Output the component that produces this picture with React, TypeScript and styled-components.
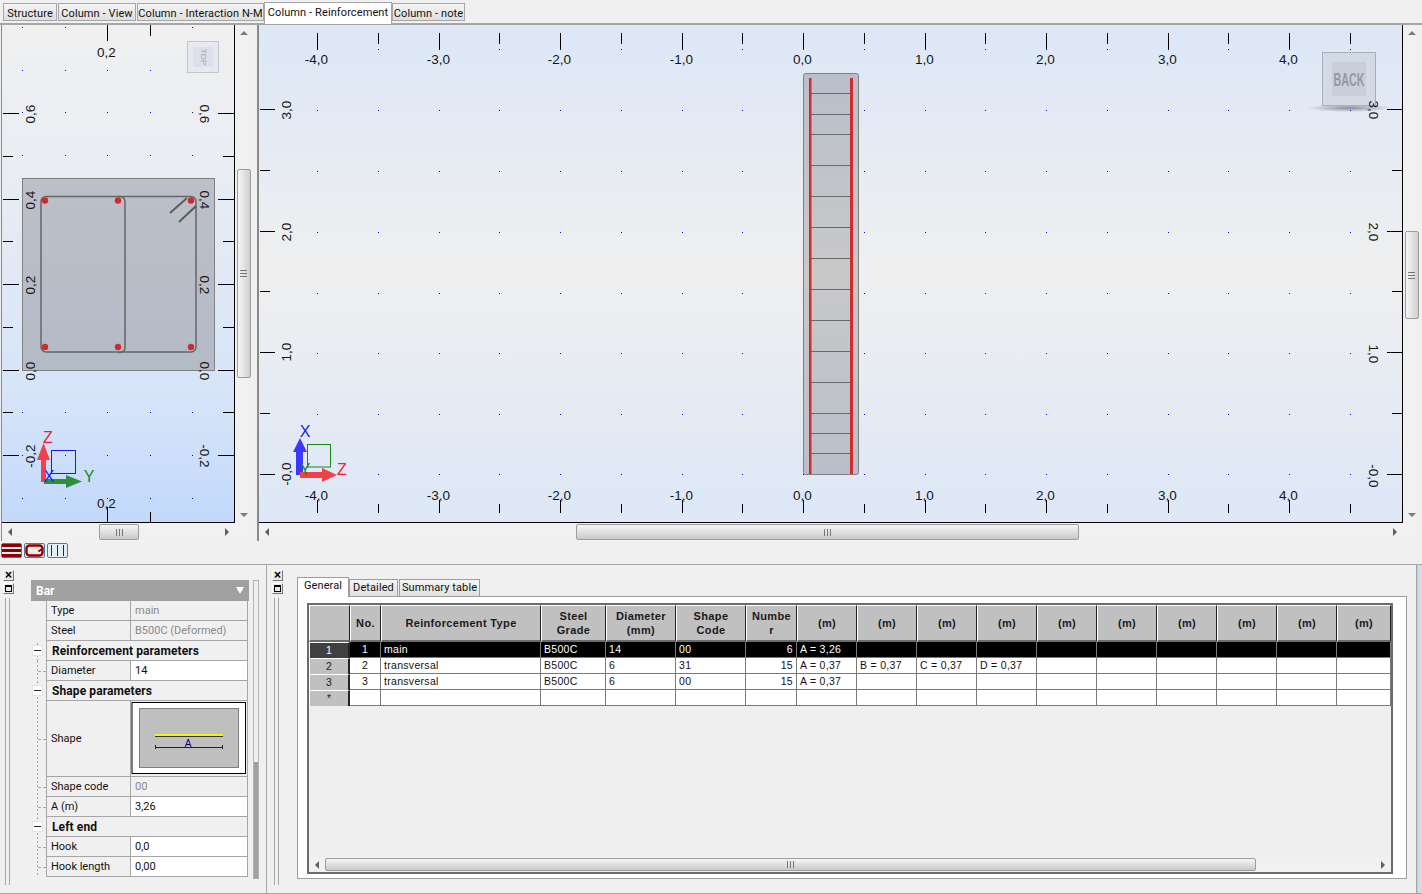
import React from "react";
import styled, { createGlobalStyle } from "styled-components";

const Global = createGlobalStyle`
  html, body { margin: 0; padding: 0; background: #f0f0f0; }
  * { box-sizing: border-box; }
`;

const UI = `Roboto, "Liberation Sans", sans-serif`;
const GRID = `"Liberation Sans", Arial, sans-serif`;

const Root = styled.div`
  width: 1422px;
  height: 894px;
  overflow: hidden;
  display: flex;
  flex-direction: column;
  background: #f0f0f0;
  font-family: ${UI};
  color: #111;
`;

const TabBar = styled.div`
  height: 25px;
  flex: none;
  display: flex;
  align-items: flex-end;
  padding-left: 3px;
  border-bottom: 2px solid #a6a6a6;
`;

const TopTab = styled.div<{ $w: number; $active?: boolean; $gap?: number }>`
  width: ${(p) => p.$w}px;
  margin-right: ${(p) => p.$gap ?? 0}px;
  height: ${(p) => (p.$active ? 22 : 18)}px;
  margin-bottom: ${(p) => (p.$active ? -1 : 2)}px;
  padding-top: 2px;
  display: flex;
  justify-content: center;
  font-size: 11px;
  letter-spacing: 0.1px;
  line-height: 15px;
  white-space: nowrap;
  background: ${(p) => (p.$active ? "#fff" : "linear-gradient(#f4f4f4, #dedede)")};
  border: 1px solid #a6a6a6;
  ${(p) => (p.$active ? "border-bottom: none;" : "")}
  position: relative;
`;

const ViewRow = styled.div`
  height: 516px;
  flex: none;
  display: flex;
  padding-left: 1px;
`;

const Pane = styled.div<{ $cols: string; $thin?: boolean }>`
  display: grid;
  grid-template-columns: ${(p) => p.$cols};
  grid-template-rows: 498px 18px;
  border-left: ${(p) => (p.$thin ? 1 : 2)}px solid #8a8a8a;
`;

const Canvas = styled.div<{ $bg: string }>`
  background: ${(p) => p.$bg};
  border-right: 1px solid #000;
  border-bottom: 1px solid #000;
  overflow: hidden;
  svg {
    display: block;
  }
`;

const ChartText = styled.text`
  font-family: ${GRID};
  font-size: 13.5px;
  fill: #151515;
  text-anchor: middle;
  dominant-baseline: central;
`;

const AxisText = styled.text<{ $c: string }>`
  font-family: ${GRID};
  font-size: 16px;
  fill: ${(p) => p.$c};
  text-anchor: middle;
`;

const Scroll = styled.div<{ $v?: boolean }>`
  display: flex;
  flex-direction: ${(p) => (p.$v ? "column" : "row")};
  background: #f1f1f1;
  min-width: 0;
  min-height: 0;
`;

const ArrowBox = styled.div<{ $v?: boolean }>`
  flex: none;
  ${(p) => (p.$v ? "height: 16px;" : "width: 16px;")}
  display: flex;
  align-items: center;
  justify-content: center;
`;

const Tri = styled.span<{ $d: "u" | "d" | "l" | "r"; $c?: string }>`
  width: 0;
  height: 0;
  ${(p) => {
    const c = p.$c ?? "#606060";
    switch (p.$d) {
      case "u":
        return `border-left:4px solid transparent;border-right:4px solid transparent;border-bottom:4px solid ${c};`;
      case "d":
        return `border-left:4px solid transparent;border-right:4px solid transparent;border-top:4px solid ${c};`;
      case "l":
        return `border-top:4px solid transparent;border-bottom:4px solid transparent;border-right:4px solid ${c};`;
      default:
        return `border-top:4px solid transparent;border-bottom:4px solid transparent;border-left:4px solid ${c};`;
    }
  }}
`;

const BarCaret = styled.span`
  width: 0;
  height: 0;
  margin-right: 0;
  border-left: 4px solid transparent;
  border-right: 4px solid transparent;
  border-top: 7px solid #fff;
`;

const ScrollZone = styled.div<{ $v?: boolean }>`
  flex: 1;
  min-width: 0;
  min-height: 0;
  display: flex;
  flex-direction: ${(p) => (p.$v ? "column" : "row")};
  ${(p) => (p.$v ? "align-items: center;" : "padding: 1px 0;")}
`;

const Thumb = styled.div<{ $v?: boolean; $off: number; $len: number; $narrow?: boolean }>`
  flex: none;
  display: flex;
  align-items: center;
  justify-content: center;
  border: 1px solid #9c9c9c;
  border-radius: 2px;
  ${(p) =>
    p.$v
      ? `margin-top:${p.$off}px;height:${p.$len}px;width:14px;background:linear-gradient(90deg,#f6f6f6,#cfcfcf);`
      : `margin-left:${p.$off}px;width:${p.$len}px;height:100%;background:linear-gradient(#f6f6f6,#c9c9c9);`}
`;

const Grip = styled.span<{ $v?: boolean }>`
  display: block;
  ${(p) =>
    p.$v
      ? "width:7px;height:7px;background:repeating-linear-gradient(#777 0 1px,transparent 1px 3px);"
      : "width:7px;height:7px;background:repeating-linear-gradient(90deg,#777 0 1px,transparent 1px 3px);"}
`;

const Scrollbar = ({ v, off, len }: { v?: boolean; off: number; len: number }) => (
  <Scroll $v={v}>
    <ArrowBox $v={v}>
      <Tri $d={v ? "u" : "l"} $c={v ? "#7c7c7c" : "#606060"} />
    </ArrowBox>
    <ScrollZone $v={v}>
      <Thumb $v={v} $off={off} $len={len}>
        <Grip $v={v} />
      </Thumb>
    </ScrollZone>
    <ArrowBox $v={v}>
      <Tri $d={v ? "d" : "r"} $c={v ? "#7c7c7c" : "#606060"} />
    </ArrowBox>
  </Scroll>
);

const Splitter = styled.div`
  width: 5px;
  flex: none;
`;

const Toolbar = styled.div`
  height: 23px;
  flex: none;
  display: flex;
  align-items: flex-start;
  gap: 2px;
  padding: 2px 0 0 1px;
`;

const ToolBtn = styled.div`
  width: 21px;
  height: 15px;
  border: 1px solid #3f7fa8;
  border-radius: 2px;
  background: #e4eef6;
  display: flex;
  svg {
    display: block;
  }
`;

const Bottom = styled.div`
  flex: 1;
  min-height: 0;
  display: flex;
  border-top: 1px solid #a6a6a6;
  border-bottom: 1px solid #a6a6a6;
`;

const LeftDock = styled.div`
  width: 267px;
  flex: none;
  display: flex;
  border-right: 1px solid #a6a6a6;
`;

const RightDock = styled.div`
  width: 1150px;
  flex: none;
  display: flex;
  border-right: 1px solid #a6a6a6;
`;

const BlueEdge = styled.div`
  flex: 1;
  background: #d2dbec;
  border-left: 1px solid #c8c8c8;
`;

const Handle = styled.div<{ $w: number; $pl: number }>`
  width: ${(p) => p.$w}px;
  flex: none;
  display: flex;
  flex-direction: column;
  padding: 5px 0 8px ${(p) => p.$pl}px;
`;

const DockBtn = styled.div`
  width: 11px;
  height: 11px;
  margin-bottom: 2px;
  background: #e8e8e8;
  border-top: 1px solid #fff;
  border-left: 1px solid #fff;
  border-right: 1px solid #777;
  border-bottom: 1px solid #777;
  font: bold 12px/9px ${GRID};
  text-align: center;
  color: #000;
`;

const RestoreMark = styled.span`
  display: block;
  margin: 1px;
  height: 7px;
  border: 1px solid #000;
  border-top-width: 2px;
`;

const Rail = styled.div`
  flex: 1;
  width: 5px;
  margin: 2px 0 0 2px;
  border-left: 1px solid #a6a6a6;
  border-right: 1px solid #a6a6a6;
`;

const PropColumn = styled.div`
  width: 218px;
  flex: none;
  padding-top: 15px;
`;

const PropHeader = styled.div`
  height: 21px;
  background: #a0a0a0;
  color: #fff;
  font-weight: 700;
  font-size: 12px;
  line-height: 20px;
  padding: 0 5px;
  display: flex;
  justify-content: space-between;
  align-items: center;
`;

const PropRow = styled.div<{ $h?: number }>`
  display: grid;
  grid-template-columns: 15px 84px 118px;
  height: ${(p) => p.$h ?? 20}px;
  width: 217px;
  font-size: 11px;
`;

const Gutter = styled.div<{ $tree?: "start" | "line" | "leaf" | "none" }>`
  position: relative;
  ${(p) =>
    p.$tree === "line" || p.$tree === "leaf"
      ? `background:linear-gradient(#a8a8a8 50%, transparent 50%) 6px 0/1px 4px repeat-y;`
      : ""}
  ${(p) =>
    p.$tree === "start"
      ? `background:linear-gradient(#a8a8a8 50%, transparent 50%) 6px 10px/1px 4px repeat-y;`
      : ""}
  ${(p) =>
    p.$tree === "leaf"
      ? `&::after{content:"";position:absolute;left:7px;width:8px;top:50%;border-top:1px dashed #a8a8a8;}`
      : ""}
`;

const Collapse = styled.span`
  position: absolute;
  left: 1px;
  top: 4px;
  width: 11px;
  height: 11px;
  background: #fff;
  border: 1px solid #e4e4e4;
  &::after {
    content: "";
    position: absolute;
    left: 1px;
    right: 1px;
    top: 4px;
    border-top: 1px solid #222;
  }
`;

const PropLabel = styled.div`
  border-left: 1px solid #a6a6a6;
  border-bottom: 1px solid #a6a6a6;
  padding-left: 4px;
  display: flex;
  align-items: center;
  white-space: nowrap;
`;

const PropValue = styled.div<{ $ro?: boolean }>`
  border-left: 1px solid #a6a6a6;
  border-right: 1px solid #a6a6a6;
  border-bottom: 1px solid #a6a6a6;
  padding-left: 4px;
  display: flex;
  align-items: center;
  white-space: nowrap;
  background: ${(p) => (p.$ro ? "#f0f0f0" : "#fff")};
  color: ${(p) => (p.$ro ? "#8a8a8a" : "#111")};
`;

const SectionTitle = styled.div`
  grid-column: 2 / 4;
  border-left: 1px solid #a6a6a6;
  border-right: 1px solid #a6a6a6;
  border-bottom: 1px solid #a6a6a6;
  padding-left: 5px;
  font-weight: 700;
  font-size: 12px;
  letter-spacing: 0.1px;
  display: flex;
  align-items: center;
  white-space: nowrap;
`;

const ShapeCell = styled.div`
  border-left: 1px solid #a6a6a6;
  border-right: 1px solid #a6a6a6;
  border-bottom: 1px solid #a6a6a6;
  padding: 1px 0 0 0;
  svg {
    display: block;
  }
`;

const GridScroll = styled.div`
  width: 6px;
  margin: 15px 0 0 4px;
  height: 299px;
  display: flex;
  flex-direction: column;
  background: #f0f0f0;
  border: 1px solid #b4b4b4;
`;

const GridScrollFill = styled.div`
  flex: none;
  margin-top: auto;
  height: 116px;
  background: #a0a0a0;
`;

const TabColumn = styled.div`
  flex: 1;
  min-width: 0;
  display: flex;
  flex-direction: column;
  padding: 12px 0 14px 1px;
`;

const InnerTabs = styled.div`
  display: flex;
  align-items: flex-end;
  height: 20px;
  flex: none;
  margin-bottom: -1px;
  position: relative;
  z-index: 1;
`;

const InnerTab = styled.div<{ $w: number; $active?: boolean }>`
  width: ${(p) => p.$w}px;
  height: ${(p) => (p.$active ? 20 : 18)}px;
  margin-right: ${(p) => (p.$active ? 0 : 1)}px;
  background: ${(p) => (p.$active ? "#fff" : "linear-gradient(#f4f4f4,#e0e0e0)")};
  border: 1px solid #9c9c9c;
  ${(p) => (p.$active ? "border-bottom: none;" : "")}
  font-size: 11px;
  letter-spacing: 0.1px;
  line-height: 16px;
  text-align: center;
  white-space: nowrap;
`;

const TabPanel = styled.div`
  flex: 1;
  min-height: 0;
  width: 1110px;
  background: #fff;
  border: 1px solid #9c9c9c;
  padding: 6px 13px 4px 9px;
  display: flex;
`;

const Table = styled.div`
  flex: 1;
  min-width: 0;
  display: flex;
  flex-direction: column;
  border: 2px solid #6c6c6c;
  background: #efefef;
  font-family: ${GRID};
  font-size: 10.5px;
`;

const COLS = "41px 31px 160px 65px 70px 70px 51px repeat(9, 60px) 1fr";

const HeadRow = styled.div`
  display: grid;
  grid-template-columns: ${COLS};
  height: 37px;
  flex: none;
`;

const HeadCell = styled.div`
  background: #c0c0c0;
  border-top: 1px solid #fff;
  border-left: 1px solid #fff;
  border-right: 1px solid #222;
  border-bottom: 2px solid #6c6c6c;
  display: flex;
  align-items: center;
  justify-content: center;
  text-align: center;
  font-weight: 700;
  font-size: 11px;
  line-height: 14px;
  letter-spacing: 0.35px;
  color: #1a1a1a;
  white-space: pre-line;
`;

const DataRow = styled.div<{ $sel?: boolean }>`
  display: grid;
  grid-template-columns: ${COLS};
  height: 16px;
  flex: none;
  background: ${(p) => (p.$sel ? "#000" : "#fff")};
  color: ${(p) => (p.$sel ? "#fff" : "#111")};
  border-bottom: 1px solid #7a7a7a;
`;

const RowHead = styled.div<{ $sel?: boolean }>`
  background: ${(p) => (p.$sel ? "#404040" : "#c0c0c0")};
  color: ${(p) => (p.$sel ? "#fff" : "#222")};
  border-top: 1px solid #fff;
  border-left: 1px solid #fff;
  border-right: 2px solid #222;
  text-align: center;
  line-height: 15px;
`;

const Cell = styled.div<{ $align?: string }>`
  border-right: 1px solid #7a7a7a;
  padding: 0 3px;
  line-height: 15px;
  letter-spacing: 0.3px;
  text-align: ${(p) => p.$align ?? "left"};
  white-space: nowrap;
  overflow: hidden;
`;

const TableSpacer = styled.div`
  flex: 1;
  min-height: 0;
`;

const TableScroll = styled.div`
  height: 15px;
  flex: none;
  display: flex;
  & > div {
    flex: 1;
  }
`;

const range = (n: number) => Array.from({ length: n }, (_, i) => i);

const Dots = ({ xs, ys }: { xs: number[]; ys: number[] }) => (
  <g fill="#0000e0">
    {ys.map((y) => xs.map((x) => <rect key={`${x}-${y}`} x={x} y={y} width="1" height="1" />))}
  </g>
);

const LeftChart = () => {
  const xs = [22, 65, 107, 150, 192];
  const ys = [27, 70, 112, 155, 412, 455, 498];
  const major = [
    [113, "0,6"],
    [199, "0,4"],
    [284, "0,2"],
    [370, "0,0"],
    [455, "-0,2"],
  ] as [number, string][];
  const minor = [156, 241, 327, 412];
  return (
    <svg width="232" height="497" viewBox="2 25 232 497">
      <Dots xs={xs} ys={ys} />
      <g stroke="#000" shapeRendering="crispEdges">
        <line x1="107.5" y1="25" x2="107.5" y2="41" />
        <line x1="150.5" y1="25" x2="150.5" y2="36" />
        <line x1="107.5" y1="507" x2="107.5" y2="522" />
        <line x1="150.5" y1="512" x2="150.5" y2="522" />
        {major.map(([y]) => (
          <g key={y}>
            <line x1="3" y1={y + 0.5} x2="19" y2={y + 0.5} />
            <line x1="218" y1={y + 0.5} x2="234" y2={y + 0.5} />
          </g>
        ))}
        {minor.map((y) => (
          <g key={y}>
            <line x1="3" y1={y + 0.5} x2="13" y2={y + 0.5} />
            <line x1="223" y1={y + 0.5} x2="234" y2={y + 0.5} />
          </g>
        ))}
      </g>
      <defs>
        <linearGradient id="secFill" x1="0" y1="0" x2="0" y2="1">
          <stop offset="0" stopColor="#bcc0c7" />
          <stop offset="1" stopColor="#b3bbc7" />
        </linearGradient>
      </defs>
      <rect x="22.5" y="178.5" width="192" height="192" fill="url(#secFill)" stroke="#808080" />
      <g fill="none" stroke="#666" strokeWidth="1.5">
        <rect x="41" y="196.5" width="155" height="155.5" rx="5" />
        <path d="M118 196.5h2a5 5 0 0 1 5 5v146a5 5 0 0 1 -5 5h-2" />
        <path d="M187 198 L170 213 M196 206 L179 222" strokeWidth="2" stroke="#5c5c5c" />
      </g>
      <g fill="#cf2a2e">
        {[45, 118, 191].map((x) => (
          <g key={x}>
            <circle cx={x} cy="200.5" r="3.2" />
            <circle cx={x} cy="347" r="3.2" />
          </g>
        ))}
      </g>
      {major.map(([y, t]) => (
        <g key={y}>
          <ChartText x="30" y={y + 1} transform={`rotate(-90 30 ${y + 1})`}>
            {t}
          </ChartText>
          <ChartText x="204" y={y + 1} transform={`rotate(90 204 ${y + 1})`}>
            {t}
          </ChartText>
        </g>
      ))}
      <ChartText x="106.5" y="52">
        0,2
      </ChartText>
      <ChartText x="106.5" y="503">
        0,2
      </ChartText>
      <rect x="187.5" y="41.5" width="31" height="31" fill="#e6e9ef" stroke="#c2c6cf" />
      <rect x="193" y="47" width="20" height="20" fill="#dde0e8" />
      <text
        x="203"
        y="57"
        transform="rotate(90 203 57)"
        textAnchor="middle"
        dominantBaseline="central"
        fontFamily={GRID}
        fontSize="8"
        fill="#a0a4ae"
      >
        TOP
      </text>
      <rect x="51.5" y="450.5" width="24" height="23" fill="none" stroke="#1a1aee" />
      <path d="M41 482V460H37L43.5 443L50 460H46V482Z" fill="#f0404c" />
      <path d="M44 479H66V475L82 481.5L66 488V484H44Z" fill="#2e8f3c" />
      <AxisText $c="#f02030" x="48" y="443">
        Z
      </AxisText>
      <AxisText $c="#1a8a1a" x="89" y="482">
        Y
      </AxisText>
      <AxisText $c="#2020ff" x="49" y="482">
        X
      </AxisText>
    </svg>
  );
};

const StirrupYs = [93, 114, 134, 165, 196, 227, 258, 289, 320, 351, 382, 413, 433, 453];

const RightChart = () => {
  const tx = (k: number) => Math.round(317 + 60.75 * k);
  const ty = (k: number) => Math.round(109 + 60.83 * k);
  const xs = range(18).map(tx);
  const ys = [49, 110, 171, 232, 293, 353, 414, 474];
  const labels = ["-4,0", "-3,0", "-2,0", "-1,0", "0,0", "1,0", "2,0", "3,0", "4,0"];
  const vLabels: [number, number, string][] = [
    [110, 110, "3,0"],
    [232, 232, "2,0"],
    [352, 354, "1,0"],
    [474, 476, "-0,0"],
  ];
  return (
    <svg width="1143" height="497" viewBox="259 25 1143 497">
      <defs>
        <radialGradient id="backShadow">
          <stop offset="0" stopColor="#6c7078" stopOpacity="0.75" />
          <stop offset="1" stopColor="#6c7078" stopOpacity="0" />
        </radialGradient>
        <linearGradient id="colFill" x1="0" y1="0" x2="0" y2="1">
          <stop offset="0" stopColor="#b9bfca" />
          <stop offset="0.5" stopColor="#c8c8c8" />
          <stop offset="1" stopColor="#b9bfca" />
        </linearGradient>
      </defs>
      <Dots xs={xs} ys={ys} />
      <ellipse cx="1349" cy="108" rx="42" ry="4" fill="url(#backShadow)" />
      <rect x="1322.5" y="52.5" width="53" height="53" fill="#d3d9e5" stroke="#a9aeb9" />
      <rect x="1332" y="62" width="34" height="34" fill="#c9cfda" />
      <text
        x="1349"
        y="86"
        textAnchor="middle"
        textLength="31"
        lengthAdjust="spacingAndGlyphs"
        fontFamily={GRID}
        fontWeight="700"
        fontSize="18"
        fill="#9298a4"
      >
        BACK
      </text>
      <g stroke="#000" shapeRendering="crispEdges">
        {xs.map((x, i) => (
          <g key={x}>
            <line x1={x + 0.5} y1="33" x2={x + 0.5} y2={i % 2 ? 44 : 49} />
            <line x1={x + 0.5} y1={i % 2 ? 504 : 500} x2={x + 0.5} y2="513" />
          </g>
        ))}
        {range(7).map((k) => (
          <g key={k}>
            <line x1="260" y1={ty(k) + 0.5} x2={k % 2 ? 270 : 275} y2={ty(k) + 0.5} />
            <line x1={k % 2 ? 1392 : 1387} y1={ty(k) + 0.5} x2="1402" y2={ty(k) + 0.5} />
          </g>
        ))}
      </g>
      <rect x="803.5" y="73.5" width="55" height="401" rx="2" fill="url(#colFill)" stroke="#808080" />
      <g stroke="#6a6a6a" shapeRendering="crispEdges">
        {StirrupYs.map((y) => (
          <line key={y} x1="809" x2="853" y1={y + 0.5} y2={y + 0.5} />
        ))}
      </g>
      <rect x="809" y="78" width="2.5" height="396" fill="#d42a2e" />
      <rect x="850" y="78" width="3" height="396" fill="#d42a2e" />
      {labels.map((t, i) => (
        <g key={t}>
          <ChartText x={tx(i * 2) - 0.5} y="59">
            {t}
          </ChartText>
          <ChartText x={tx(i * 2) - 0.5} y="495">
            {t}
          </ChartText>
        </g>
      ))}
      {vLabels.map(([yl, yr, t]) => (
        <g key={t}>
          <ChartText x="286" y={yl} transform={`rotate(-90 286 ${yl})`}>
            {t}
          </ChartText>
          <ChartText x="1373" y={yr} transform={`rotate(90 1373 ${yr})`}>
            {t}
          </ChartText>
        </g>
      ))}
      <rect x="307.5" y="444.5" width="23" height="22.5" fill="none" stroke="#138a13" />
      <path d="M296 475V452H293L300 438L307 452H303V475Z" fill="#3a3aff" />
      <path d="M300 472H322V468L337 475L322 482V478H300Z" fill="#f0404c" />
      <AxisText $c="#2020ff" x="305" y="437">
        X
      </AxisText>
      <AxisText $c="#f02030" x="342" y="475">
        Z
      </AxisText>
      <AxisText $c="#1a8a1a" x="305" y="475">
        Y
      </AxisText>
    </svg>
  );
};

const ShapePreview = () => (
  <svg width="116" height="73" viewBox="131 702 116 73">
    <rect x="132" y="702.5" width="113.5" height="71" fill="#fff" stroke="#000" />
    <rect x="139.5" y="708.5" width="99" height="59" fill="#bfbfbf" stroke="#808080" />
    <rect x="155" y="734" width="68" height="2" fill="#f5f500" />
    <line x1="155" y1="736.5" x2="223" y2="736.5" stroke="#333" />
    <path d="M155.5 745v4M222.5 745v4M155.5 747.5H222.5" stroke="#222" fill="none" />
    <text x="188" y="747" textAnchor="middle" fontFamily={GRID} fontSize="10" fill="#000080">
      A
    </text>
  </svg>
);

const heads = [
  "",
  "No.",
  "Reinforcement Type",
  "Steel\nGrade",
  "Diameter\n(mm)",
  "Shape\nCode",
  "Numbe\nr",
  ...range(10).map(() => "(m)"),
];

const rows: { h: string; cells: string[]; sel?: boolean }[] = [
  { h: "1", sel: true, cells: ["1", "main", "B500C", "14", "00", "6", "A = 3,26"] },
  { h: "2", cells: ["2", "transversal", "B500C", "6", "31", "15", "A = 0,37", "B = 0,37", "C = 0,37", "D = 0,37"] },
  { h: "3", cells: ["3", "transversal", "B500C", "6", "00", "15", "A = 0,37"] },
  { h: "*", cells: [] },
];

export default function App() {
  return (
    <Root>
      <Global />
      <TabBar>
        <TopTab $w={54} $gap={1}>Structure</TopTab>
        <TopTab $w={78} $gap={1}>Column - View</TopTab>
        <TopTab $w={127}>Column - Interaction N-M</TopTab>
        <TopTab $w={128} $active>Column - Reinforcement</TopTab>
        <TopTab $w={73}>Column - note</TopTab>
      </TabBar>

      <ViewRow>
        <Pane $cols="233px 17px" $thin>
          <Canvas $bg="linear-gradient(#f0f0f0 0%, #e9edf3 30%, #d6e4f9 75%, #c2d9fb 100%)">
            <LeftChart />
          </Canvas>
          <Scrollbar v off={128} len={209} />
          <Scrollbar off={81} len={40} />
          <Scroll />
        </Pane>
        <Splitter />
        <Pane $cols="1144px 17px">
          <Canvas $bg="linear-gradient(#dde7f7 0%, #efefef 50%, #dde7f7 100%)">
            <RightChart />
          </Canvas>
          <Scrollbar v off={190} len={88} />
          <Scrollbar off={301} len={503} />
          <Scroll />
        </Pane>
      </ViewRow>

      <Toolbar>
        <ToolBtn>
          <svg width="19" height="13" viewBox="0 0 19 13" shapeRendering="crispEdges">
            <path d="M0 0h19v3H0zM0 5h19v3H0zM0 10h19v3H0z" fill="#8b0000" />
          </svg>
        </ToolBtn>
        <ToolBtn>
          <svg width="19" height="13" viewBox="0 0 19 13">
            <rect x="1.5" y="1.5" width="16" height="10" rx="3" fill="#f4e8e8" stroke="#8b0000" strokeWidth="2.4" />
            <path d="M17 5l-3.5 2.5" stroke="#8b0000" strokeWidth="2" />
          </svg>
        </ToolBtn>
        <ToolBtn>
          <svg width="19" height="13" viewBox="0 0 19 13" shapeRendering="crispEdges">
            <path d="M3.5 1v11M9.5 1v11M15.5 1v11" stroke="#8b0000" strokeWidth="1" />
          </svg>
        </ToolBtn>
      </Toolbar>

      <Bottom>
        <LeftDock>
          <Handle $w={31} $pl={3}>
            <DockBtn>×</DockBtn>
            <DockBtn>
              <RestoreMark />
            </DockBtn>
            <Rail />
          </Handle>
          <PropColumn>
            <PropHeader>
              Bar
              <BarCaret />
            </PropHeader>
            <PropRow>
              <Gutter />
              <PropLabel>Type</PropLabel>
              <PropValue $ro>main</PropValue>
            </PropRow>
            <PropRow>
              <Gutter />
              <PropLabel>Steel</PropLabel>
              <PropValue $ro>B500C (Deformed)</PropValue>
            </PropRow>
            <PropRow>
              <Gutter $tree="start">
                <Collapse />
              </Gutter>
              <SectionTitle>Reinforcement parameters</SectionTitle>
            </PropRow>
            <PropRow>
              <Gutter $tree="leaf" />
              <PropLabel>Diameter</PropLabel>
              <PropValue>14</PropValue>
            </PropRow>
            <PropRow>
              <Gutter $tree="line">
                <Collapse />
              </Gutter>
              <SectionTitle>Shape parameters</SectionTitle>
            </PropRow>
            <PropRow $h={76}>
              <Gutter $tree="leaf" />
              <PropLabel>Shape</PropLabel>
              <ShapeCell>
                <ShapePreview />
              </ShapeCell>
            </PropRow>
            <PropRow>
              <Gutter $tree="leaf" />
              <PropLabel>Shape code</PropLabel>
              <PropValue $ro>00</PropValue>
            </PropRow>
            <PropRow>
              <Gutter $tree="leaf" />
              <PropLabel>A (m)</PropLabel>
              <PropValue>3,26</PropValue>
            </PropRow>
            <PropRow>
              <Gutter $tree="line">
                <Collapse />
              </Gutter>
              <SectionTitle>Left end</SectionTitle>
            </PropRow>
            <PropRow>
              <Gutter $tree="leaf" />
              <PropLabel>Hook</PropLabel>
              <PropValue>0,0</PropValue>
            </PropRow>
            <PropRow>
              <Gutter $tree="leaf" />
              <PropLabel>Hook length</PropLabel>
              <PropValue>0,00</PropValue>
            </PropRow>
          </PropColumn>
          <GridScroll>
            <GridScrollFill />
          </GridScroll>
        </LeftDock>

        <RightDock>
          <Handle $w={29} $pl={5}>
            <DockBtn>×</DockBtn>
            <DockBtn>
              <RestoreMark />
            </DockBtn>
            <Rail />
          </Handle>
          <TabColumn>
            <InnerTabs>
              <InnerTab $w={52} $active>General</InnerTab>
              <InnerTab $w={49}>Detailed</InnerTab>
              <InnerTab $w={81}>Summary table</InnerTab>
            </InnerTabs>
            <TabPanel>
              <Table>
                <HeadRow>
                  {heads.map((h, i) => (
                    <HeadCell key={i}>{h}</HeadCell>
                  ))}
                </HeadRow>
                {rows.map((r) => (
                  <DataRow key={r.h} $sel={r.sel}>
                    <RowHead $sel={r.sel}>{r.h}</RowHead>
                    {range(16).map((i) => (
                      <Cell key={i} $align={i === 0 ? "center" : i === 5 ? "right" : "left"}>
                        {r.cells[i] ?? ""}
                      </Cell>
                    ))}
                  </DataRow>
                ))}
                <TableSpacer />
                <TableScroll>
                  <Scrollbar off={0} len={931} />
                </TableScroll>
              </Table>
            </TabPanel>
          </TabColumn>
        </RightDock>
        <BlueEdge />
      </Bottom>
    </Root>
  );
}
